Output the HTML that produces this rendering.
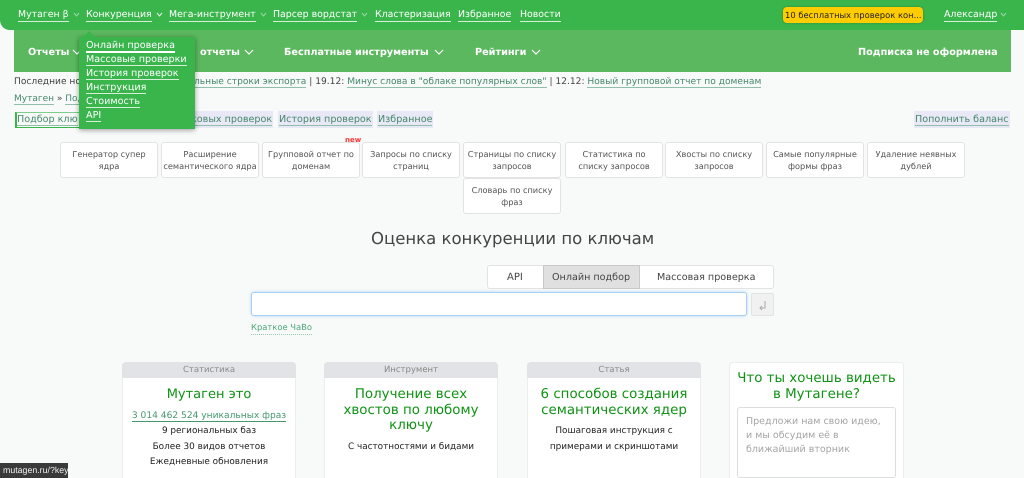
<!DOCTYPE html>
<html lang="ru"><head><meta charset="utf-8"><title>Мутаген</title>
<style>
*{box-sizing:border-box}
html{margin:0;padding:0;overflow:hidden;width:1024px;height:478px}
body{margin:0;padding:0;width:1024px;height:478px;overflow:hidden;position:relative;background:#f8faf9;font-family:"DejaVu Sans",Verdana,"Liberation Sans",sans-serif;font-size:9.6px;color:#444;text-rendering:geometricPrecision}
#w{position:absolute;left:0;top:0;width:1024px;height:478px;overflow:hidden;filter:blur(.3px)}
.a{position:absolute;white-space:nowrap}
#top{position:absolute;left:0;top:0;width:1024px;height:30px;background:#39b54c;border-bottom-left-radius:10px}
.t{color:#fff;border-bottom:1px solid #d5efd9;line-height:13px;top:8px;font-size:9.4px}
.c{position:absolute;top:11px;width:7px;height:7px}
#sub{position:absolute;left:14px;top:30px;width:997px;height:42px;background:#5cb85f}
.s{color:#fff;font-weight:bold;top:46px;font-size:9.7px;line-height:13px}
#dd{position:absolute;left:79px;top:37px;width:116px;height:92px;background:#39b54c;box-shadow:0 1px 5px rgba(0,0,0,.4)}
#dd:before{content:"";position:absolute;left:4px;top:-6px;border:6px solid transparent;border-top:0;border-bottom-color:#39b54c}
.d{position:absolute;left:7px;color:#fff;border-bottom:1px solid #d5efd9;line-height:11px;white-space:nowrap;font-size:9.6px}
.g{color:#45886a;border-bottom:1px solid #8fbfa8;line-height:12px}
.n{top:76px;font-size:9.1px;line-height:12px}
.tab{top:111px;height:17px;background:#e8e8f6;color:#45886a;padding:3px 1px 0;line-height:12px;font-size:9.6px}
.tab span{border-bottom:1px solid #8fbfa8}
.b{position:absolute;width:98px;height:36px;background:#fff;border:1px solid #e2e4e3;border-radius:3px;text-align:center;font-size:8.2px;line-height:12.4px;padding:5px 0 0;color:#555}
.card{position:absolute;top:362px;height:130px;background:#fff;border:1px solid #eceeee;border-radius:4px;text-align:center;color:#222;font-size:8.9px}
.card .h{height:16px;background:#e2e3e7;color:#888;line-height:16px;margin:-1px -1px 0;border-radius:4px 4px 0 0;font-size:8.5px}
.card .ti{color:#0f9214;font-size:13.4px;line-height:15.5px}
.card p{margin:0;line-height:15.5px}
</style></head><body><div id="w">
<div id="top"></div>
<div class="a t" style="left:18px">Мутаген β</div>
<div class="a t" style="left:86px">Конкуренция</div>
<div class="a t" style="left:169px">Мега-инструмент</div>
<div class="a t" style="left:273px">Парсер вордстат</div>
<div class="a t" style="left:375px">Кластеризация</div>
<div class="a t" style="left:458px">Избранное</div>
<div class="a t" style="left:520px">Новости</div>
<div class="a t" style="left:944px">Александр</div>
<svg class="c" style="left:73px" viewBox="0 0 7 7"><path d="M1 2l2.500 3L6 2" fill="none" stroke="#9bd8a6"/></svg>
<svg class="c" style="left:156px" viewBox="0 0 7 7"><path d="M1 2l2.500 3L6 2" fill="none" stroke="#e4f5e7"/></svg>
<svg class="c" style="left:260px" viewBox="0 0 7 7"><path d="M1 2l2.500 3L6 2" fill="none" stroke="#9bd8a6"/></svg>
<svg class="c" style="left:361px" viewBox="0 0 7 7"><path d="M1 2l2.500 3L6 2" fill="none" stroke="#9bd8a6"/></svg>
<svg class="c" style="left:1000px" viewBox="0 0 7 7"><path d="M1 2l2.500 3L6 2" fill="none" stroke="#9bd8a6"/></svg>
<div class="a" style="left:783px;top:7px;width:140px;height:16px;background:#ffcc00;border-radius:4px;color:#222;font-size:8.4px;line-height:16px;padding-left:2px;box-shadow:0 0 2px rgba(0,0,0,.25)">10 бесплатных проверок кон...</div>
<div id="sub"></div>
<div class="a s" style="left:28px">Отчеты</div>
<div class="a s" style="left:200px">отчеты</div>
<div class="a s" style="left:284px">Бесплатные инструменты</div>
<div class="a s" style="left:475px">Рейтинги</div>
<div class="a s" style="left:858px">Подписка не оформлена</div>
<svg class="a" style="left:72px;top:48px" width="10" height="8" viewBox="0 0 10 8"><path d="M1 2l4 4 4-4" fill="none" stroke="#fff" stroke-width="1.200"/></svg>
<svg class="a" style="left:244px;top:48px" width="10" height="8" viewBox="0 0 10 8"><path d="M1 2l4 4 4-4" fill="none" stroke="#fff" stroke-width="1.200"/></svg>
<svg class="a" style="left:434px;top:48px" width="10" height="8" viewBox="0 0 10 8"><path d="M1 2l4 4 4-4" fill="none" stroke="#fff" stroke-width="1.200"/></svg>
<svg class="a" style="left:531px;top:48px" width="10" height="8" viewBox="0 0 10 8"><path d="M1 2l4 4 4-4" fill="none" stroke="#fff" stroke-width="1.200"/></svg>
<div class="a n" style="left:14px">Последние но</div>
<div class="a n" style="left:194px"><span class="g">льные строки экспорта</span> | 19.12: <span class="g">Минус слова в "облаке популярных слов"</span> | 12.12: <span class="g">Новый групповой отчет по доменам</span></div>
<div class="a n" style="left:14px;top:93px;font-size:9px"><span class="g">Мутаген</span> » <span class="g">Под</span></div>
<div class="a" style="left:15px;top:112px;width:66px;height:16px;border-left:2px solid #39b54c;border-bottom:1px solid #39b54c;border-top:1px solid #7fcc8b;color:#45886a;font-size:9.6px;line-height:14px"><span style="border-bottom:1px solid #8fbfa8">Подбор клю</span></div>
<div class="a tab" style="left:190px"><span>ковых проверок</span></div>
<div class="a tab" style="left:278px"><span>История проверок</span></div>
<div class="a tab" style="left:377px"><span>Избранное</span></div>
<div class="a tab" style="left:914px"><span>Пополнить баланс</span></div>
<div id="dd">
<div class="d" style="top:3px;border-bottom:2px solid #fff">Онлайн проверка</div>
<div class="d" style="top:17px">Массовые проверки</div>
<div class="d" style="top:31px">История проверок</div>
<div class="d" style="top:45px">Инструкция</div>
<div class="d" style="top:59px">Стоимость</div>
<div class="d" style="top:73px">API</div>
</div>
<div class="b" style="left:60px;top:142px">Генератор супер<br>ядра</div>
<div class="b" style="left:161px;top:142px">Расширение<br>семантического ядра</div>
<div class="b" style="left:262px;top:142px">Групповой отчет по<br>доменам</div>
<div class="a" style="left:345px;top:136px;color:#f33;font-size:7px;font-weight:bold;line-height:9px">new</div>
<div class="b" style="left:362px;top:142px">Запросы по списку<br>страниц</div>
<div class="b" style="left:463px;top:142px">Страницы по списку<br>запросов</div>
<div class="b" style="left:565px;top:142px">Статистика по<br>списку запросов</div>
<div class="b" style="left:665px;top:142px">Хвосты по списку<br>запросов</div>
<div class="b" style="left:766px;top:142px">Самые популярные<br>формы фраз</div>
<div class="b" style="left:867px;top:142px">Удаление неявных<br>дублей</div>
<div class="b" style="left:463px;top:178px">Словарь по списку<br>фраз</div>
<div class="a" style="left:371px;top:229px;font-size:16.500px;line-height:20px;color:#444">Оценка конкуренции по ключам</div>
<div class="a" style="left:487px;top:265px;width:287px;height:24px;background:#fff;border:1px solid #e2e4e3;border-radius:3px"></div>
<div class="a" style="left:543px;top:265px;width:97px;height:24px;background:#e0e0e0;border:1px solid #c8c8c8"></div>
<div class="a" style="left:507px;top:271px;font-size:10px;line-height:13px">API</div>
<div class="a" style="left:552px;top:271px;font-size:9.6px;line-height:13px">Онлайн подбор</div>
<div class="a" style="left:657px;top:271px;font-size:9.6px;line-height:13px">Массовая проверка</div>
<div class="a" style="left:251px;top:292px;width:496px;height:24px;background:#fff;border:1px solid #a9cff2;border-radius:3px;box-shadow:0 0 3px #b5d8f7"></div>
<div class="a" style="left:751px;top:293px;width:23px;height:23px;background:#f0f1f0;border:1px solid #e2e4e3;border-radius:2px"></div>
<svg class="a" style="left:756px;top:298px" width="13" height="13" viewBox="0 0 13 13"><path d="M9 3v7H4M6 8l-2 2 2 2" fill="none" stroke="#a8aaa8"/></svg>
<div class="a" style="left:251px;top:321px;font-size:8.400px;line-height:13px;color:#4da77c;border-bottom:1px dotted #9ac9b2">Краткое ЧаВо</div>
<div class="card" style="left:122px;width:174px"><div class="h">Статистика</div>
<div class="ti" style="margin-top:9px;font-size:13px">Мутаген это</div>
<p style="margin-top:6px"><span style="color:#45986f;border-bottom:1px solid #45986f;font-size:9.1px">3 014 462 524 уникальных фраз</span></p><p>9 региональных баз</p><p>Более 30 видов отчетов</p><p>Ежедневные обновления</p></div>
<div class="card" style="left:324px;width:174px"><div class="h">Инструмент</div>
<div class="ti" style="margin-top:9px">Получение всех<br>хвостов по любому<br>ключу</div>
<p style="margin-top:6px">С частотностями и бидами</p></div>
<div class="card" style="left:527px;width:174px"><div class="h">Статья</div>
<div class="ti" style="margin-top:9px">6 способов создания<br>семантических ядер</div>
<p style="margin-top:6px">Пошаговая инструкция с<br>примерами и скриншотами</p></div>
<div class="card" style="left:729px;width:175px;padding-top:8px"><div class="ti">Что ты хочешь видеть<br>в Мутагене?</div>
<div class="a" style="left:7px;top:44px;width:159px;height:71px;border:1px solid #dcdedd;border-radius:3px;background:#fff;color:#a5a5a5;text-align:left;font-size:9.500px;line-height:14px;padding:7px 8px;white-space:normal">Предложи нам свою идею,<br>и мы обсудим её в<br>ближайший вторник</div></div>
<div class="a" style="left:0;top:463px;width:68px;height:15px;background:#3a3a3a;color:#eee;font-size:8.800px;line-height:15px;padding-left:3px;font-family:'Liberation Sans',sans-serif">mutagen.ru/?key</div>
</div></body></html>
